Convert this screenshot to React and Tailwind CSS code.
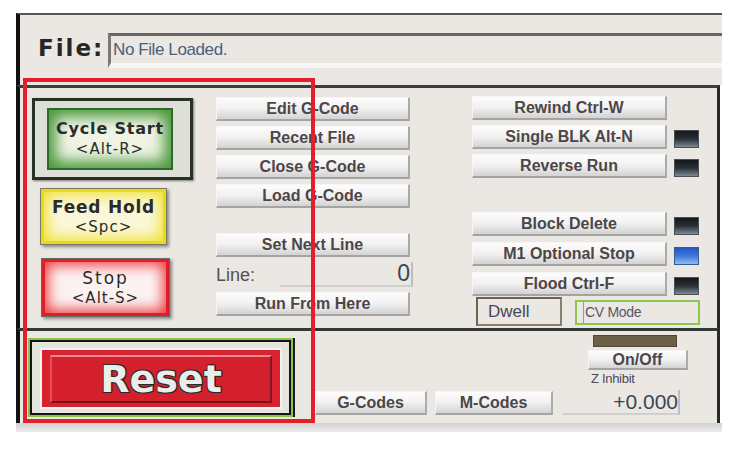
import React from "react";

const btn =
  "flex items-center justify-center bg-linear-to-b from-[#fdfdfd] via-[#f1f1f1] to-[#d3d3d3] border-t border-l border-t-[#f6f6f6] border-l-[#f6f6f6] border-r-2 border-b-2 border-r-[#ababab] border-b-[#a4a4a4] text-[16px] font-bold text-[#4d4647] leading-none whitespace-nowrap";

const ledDark =
  "w-[25px] h-[18px] ml-[7px] mb-[1px] border border-[#4a4f55] bg-linear-to-b from-[#15181c] via-[#2a3038] to-[#7d8a97]";
const ledBlue =
  "w-[25px] h-[18px] ml-[7px] mb-[1px] border border-[#3a5a90] bg-linear-to-b from-[#2556c4] via-[#3f78da] to-[#8cbcf2]";

const sans = { fontFamily: '"Liberation Sans", Arial, sans-serif' };
const deja = { fontFamily: '"DejaVu Sans", Verdana, sans-serif' };

function Btn({ className = "", children }) {
  return (
    <div className={`${btn} ${className}`} style={sans}>
      {children}
    </div>
  );
}

export default function App() {
  return (
    <div className="relative w-[737px] h-[457px] bg-white overflow-hidden">
      <div className="pl-[16px] pt-[13px]">
        <div className="w-[706px] flex flex-col">
          {/* Top: File */}
          <div className="h-[72px] bg-[#ebe8e3] border-t-2 border-t-[#565656] border-l-4 border-l-[#111] flex items-start pt-[18px]">
            <div
              className="w-[88px] pl-[18px] h-[30px] flex items-center text-[23px] font-bold tracking-[2px] text-[#262626]"
              style={deja}
            >
              File:
            </div>
            <div className="flex-1 h-[35px] border-t-[3px] border-l-[3px] border-t-[#666] border-l-[#7a7a7a] border-b-[5px] border-b-[#f8f7f4] bg-[#ebe8e3] flex items-center pl-[2px]">
              <span className="text-[17px] text-[#48607c] tracking-[-0.4px]" style={sans}>
                No File Loaded.
              </span>
            </div>
          </div>

          {/* Middle */}
          <div className="w-[704px] h-[243px] bg-[#ebe8e3] border-t-[3px] border-t-[#38403e] border-r-[3px] border-r-[#262b2a] border-l-4 border-l-[#111] flex">
            {/* Left column */}
            <div className="ml-[12px] pt-[10px] flex flex-col">
              <div className="w-[161px] h-[82px] border-[3px] border-[#263226] bg-[#dedfd6] pl-[12px] pt-[7px] shadow-[1px_1px_2px_#777]">
                <div
                  className="w-[126px] h-[62px] bg-[#eef3e4] shadow-[inset_0_0_0_2px_#2d6a2d,inset_0_0_14px_9px_#4e9a3e] flex flex-col items-center justify-center text-[#2b2b2b] leading-[20px]"
                  style={deja}
                >
                  <span className="text-[16px] font-bold tracking-[0.8px]">Cycle Start</span>
                  <span className="text-[15px] tracking-[1px]">&lt;Alt-R&gt;</span>
                </div>
              </div>
              <div
                className="mt-[8px] ml-[8px] w-[127px] h-[57px] border border-[#7a7a6a] bg-[#faf7d8] shadow-[inset_0_0_0_3px_#e9d81e,inset_0_0_14px_6px_#f0e12e,2px_2px_3px_#8a8a8a] flex flex-col items-center justify-center text-[#2b2b2b] leading-[20px]"
                style={deja}
              >
                <span className="text-[17px] font-bold tracking-[0.8px]">Feed Hold</span>
                <span className="text-[15px] tracking-[1px]">&lt;Spc&gt;</span>
              </div>
              <div
                className="mt-[13px] ml-[9px] w-[129px] h-[59px] border border-[#6a6a6a] bg-[#fbf3f2] shadow-[inset_0_0_0_3px_#df1f28,inset_0_0_14px_6px_#ec3a3e,2px_2px_3px_#8a8a8a] flex flex-col items-center justify-center text-[#2b2b2b] leading-[20px]"
                style={deja}
              >
                <span className="text-[17px] tracking-[2px]">Stop</span>
                <span className="text-[15px] tracking-[1px]">&lt;Alt-S&gt;</span>
              </div>
            </div>

            {/* Middle column */}
            <div className="ml-[23px] pt-[9px] flex flex-col w-[194px]">
              <div className="flex flex-col gap-[5px]">
                <Btn className="h-[24px] w-[194px]">Edit G-Code</Btn>
                <Btn className="h-[24px] w-[194px]">Recent File</Btn>
                <Btn className="h-[24px] w-[194px]">Close G-Code</Btn>
                <Btn className="h-[24px] w-[194px]">Load G-Code</Btn>
              </div>
              <Btn className="mt-[25px] h-[24px] w-[194px]">Set Next Line</Btn>
              <div className="mt-[5px] h-[25px] w-[197px] flex items-center">
                <span className="text-[18px] text-[#575050] leading-none" style={sans}>
                  Line:
                </span>
                <div className="ml-auto w-[133px] h-[25px] border-b-2 border-r-2 border-b-[#cfcfcf] border-r-[#bdbdbd] flex items-center justify-end pr-[1px]">
                  <span className="text-[23px] text-[#3a4656] leading-none" style={sans}>
                    0
                  </span>
                </div>
              </div>
              <Btn className="mt-[5px] h-[24px] w-[194px]">Run From Here</Btn>
            </div>

            {/* Right column */}
            <div className="ml-[62px] pt-[8px] flex flex-col">
              <div className="flex flex-col gap-[5px]">
                <div className="flex items-end">
                  <Btn className="h-[24px] w-[195px]">Rewind Ctrl-W</Btn>
                </div>
                <div className="flex items-end">
                  <Btn className="h-[24px] w-[195px]">Single BLK Alt-N</Btn>
                  <div className={ledDark} />
                </div>
                <div className="flex items-end">
                  <Btn className="h-[24px] w-[195px]">Reverse Run</Btn>
                  <div className={ledDark} />
                </div>
              </div>
              <div className="mt-[34px] flex flex-col gap-[6px]">
                <div className="flex items-end">
                  <Btn className="h-[24px] w-[195px]">Block Delete</Btn>
                  <div className={ledDark} />
                </div>
                <div className="flex items-end">
                  <Btn className="h-[24px] w-[195px]">M1 Optional Stop</Btn>
                  <div className={ledBlue} />
                </div>
                <div className="flex items-end">
                  <Btn className="h-[24px] w-[195px]">Flood Ctrl-F</Btn>
                  <div className={ledDark} />
                </div>
              </div>
              <div className="mt-[1px] flex items-start">
                <div
                  className="ml-[4px] w-[86px] h-[29px] border-2 border-[#6e6250] border-r-[#8a7f6e] border-b-[#8a7f6e] flex items-center pl-[10px] text-[17px] text-[#47475a]"
                  style={sans}
                >
                  Dwell
                </div>
                <div
                  className="ml-[13px] mt-[3px] w-[125px] h-[25px] border-2 border-[#8cc74e] flex items-center pl-[6px] text-[14px] text-[#55556a] tracking-[-0.3px]"
                  style={sans}
                >
                  <div className="h-full border-l border-[#9a9a8a] pl-[1px] flex items-center">CV Mode</div>
                </div>
              </div>
            </div>
          </div>

          {/* Bottom */}
          <div className="w-[704px] h-[95px] bg-[#ebe8e3] border-t-[3px] border-t-[#323937] border-r-[3px] border-r-[#262b2a] border-l-4 border-l-[#111] flex">
            <div className="ml-[8px] mt-[7px] w-[265px] h-[79px] border-2 border-[#8bc34a] flex shadow-[2px_0_0_#1a1a1a]">
              <div className="flex-1 border-2 border-[#151515] bg-[#e4e6de] pl-[8px] pr-[7px] pt-[6px] pb-[4px] flex">
                <div className="flex-1 border-2 border-[#f6f4f4] bg-[#d9222f] px-[8px] pt-[5px] pb-[4px] flex">
                  <div
                    className="flex-1 bg-[#d41f2d] border-t-2 border-t-[#f08a94] border-l-2 border-l-[#e2505e] border-b-2 border-b-[#7a1018] border-r-2 border-r-[#861722] flex items-center justify-center text-[38px] font-bold leading-none text-[#e9eeec] [text-shadow:1px_1px_0_#2a2a2a,-1px_-1px_0_#2a2a2a,1px_-1px_0_#2a2a2a,-1px_1px_0_#2a2a2a]"
                    style={deja}
                  >
                    Reset
                  </div>
                </div>
              </div>
            </div>

            <Btn className="self-end mb-[8px] ml-[22px] h-[24px] w-[112px]">G-Codes</Btn>
            <Btn className="self-end mb-[8px] ml-[8px] h-[24px] w-[118px]">M-Codes</Btn>

            <div className="ml-[10px] w-[127px] flex flex-col">
              <div className="mt-[4px] ml-[30px] w-[84px] h-[12px] bg-[#6c6046] border border-[#4e4636]" />
              <Btn className="mt-[3px] ml-[25px] w-[100px] h-[20px]">On/Off</Btn>
              <div className="ml-[28px] h-[18px] flex items-center text-[13px] text-[#4a4a58] tracking-[-0.3px]" style={sans}>
                Z Inhibit
              </div>
              <div className="mt-[2px] w-[117px] h-[25px] border-b-2 border-r-2 border-b-[#cfcfcf] border-r-[#bdbdbd] flex items-center justify-end">
                <span className="text-[21px] text-[#3a4656] leading-none" style={sans}>
                  +0.000
                </span>
              </div>
            </div>
          </div>

          {/* Bottom strip */}
          <div className="w-[706px] h-[9px] bg-linear-to-b from-[#d2d2d2] to-[#ececec]" />
        </div>
      </div>

      {/* Red annotation rectangle */}
      <div className="absolute left-[23px] top-[78px] w-[292px] h-[345px] border-4 border-[#e31e2d] pointer-events-none" />
    </div>
  );
}
